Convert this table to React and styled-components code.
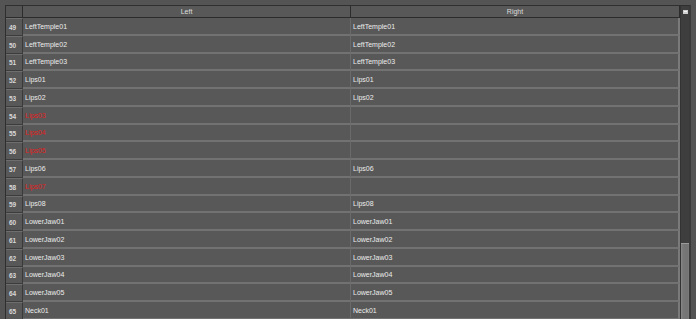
import styled, { createGlobalStyle } from 'styled-components';

const GlobalStyle = createGlobalStyle`
  html, body {
    margin: 0;
    padding: 0;
    background: #545454;
    overflow: hidden;
  }
  body {
    font-family: 'Liberation Sans', Arial, sans-serif;
  }
`;

const rows = [
  [49, 'LeftTemple01', 'LeftTemple01'],
  [50, 'LeftTemple02', 'LeftTemple02'],
  [51, 'LeftTemple03', 'LeftTemple03'],
  [52, 'Lips01', 'Lips01'],
  [53, 'Lips02', 'Lips02'],
  [54, 'Lips03', '', true],
  [55, 'Lips04', '', true],
  [56, 'Lips05', '', true],
  [57, 'Lips06', 'Lips06'],
  [58, 'Lips07', '', true],
  [59, 'Lips08', 'Lips08'],
  [60, 'LowerJaw01', 'LowerJaw01'],
  [61, 'LowerJaw02', 'LowerJaw02'],
  [62, 'LowerJaw03', 'LowerJaw03'],
  [63, 'LowerJaw04', 'LowerJaw04'],
  [64, 'LowerJaw05', 'LowerJaw05'],
  [65, 'Neck01', 'Neck01'],
];

const Frame = styled.div`
  width: 696px;
  height: 319px;
  padding: 5px 0 0 5px;
  box-sizing: border-box;
  overflow: hidden;
`;

const Table = styled.div`
  display: flex;
  width: 686px;
  height: 320px;
  border-top: 1px solid #2f2f2f;
  border-left: 1px solid #2f2f2f;
  border-right: 2px solid #3a3a3a;
  box-sizing: border-box;
`;

const Grid = styled.div`
  flex: 1;
  display: grid;
  grid-template-columns: 17px 328px 329px;
  grid-auto-rows: 17.75px;
  grid-template-rows: 12px;
  align-content: start;
`;

const Corner = styled.div`
  background: #555555;
  border-bottom: 1px solid #2c2c2c;
  border-right: 1px solid #2c2c2c;
`;

const HeadCell = styled.div`
  display: flex;
  align-items: center;
  justify-content: center;
  background: #585858;
  color: #dcdcdc;
  font-size: 7px;
  border-bottom: 1px solid #2c2c2c;
  border-right: 1px solid #2c2c2c;
  box-sizing: border-box;
`;

const RowNum = styled.div`
  display: flex;
  align-items: center;
  padding: 1px 0 0 3px;
  background: #585858;
  color: #d8d8d8;
  font-size: 6.5px;
  font-weight: 700;
  border-top: 1px solid #6e6e6e;
  border-right: 1px solid #3a3a3a;
  border-bottom: 1px solid #3c3c3c;
  box-sizing: border-box;
`;

const Cell = styled.div`
  display: flex;
  align-items: center;
  padding: 1px 0 0 2px;
  background: #585858;
  color: ${({ $missing }) => ($missing ? '#e02020' : '#ececec')};
  font-size: 7px;
  border-bottom: 2px solid #727272;
  border-right: ${({ $last }) => ($last ? '2px solid #7a7a7a' : '1px solid #6a6a6a')};
  box-sizing: border-box;
  white-space: nowrap;
`;

const ScrollBar = styled.div`
  width: 10px;
  display: flex;
  flex-direction: column;
  background: #3e3e3e;
  border-left: 1px solid #333;
  box-sizing: border-box;
`;

const ScrollTop = styled.div`
  height: 12px;
  display: flex;
  align-items: center;
  justify-content: center;
`;

const Track = styled.div`
  flex: 1;
  display: flex;
  flex-direction: column;
  padding-top: 225px;
`;

const Thumb = styled.div`
  flex: 1;
  background: linear-gradient(90deg, #8a8a8a 0px, #777 2px, #747474 7px, #8c8c8c 9px);
  border-top: 1px solid #9a9a9a;
`;

export default function App() {
  return (
    <>
      <GlobalStyle />
      <Frame>
        <Table>
          <Grid>
            <Corner />
            <HeadCell>Left</HeadCell>
            <HeadCell>Right</HeadCell>
            {rows.map(([n, l, r, missing]) => (
              <Row key={n} n={n} l={l} r={r} missing={missing} />
            ))}
          </Grid>
          <ScrollBar>
            <ScrollTop>
              <svg width="5" height="4" viewBox="0 0 5 4">
                <rect x="0" y="0" width="5" height="4" fill="#cfcfcf" />
                <rect x="1" y="1" width="3" height="1" fill="#f4f4f4" />
              </svg>
            </ScrollTop>
            <Track>
              <Thumb />
            </Track>
          </ScrollBar>
        </Table>
      </Frame>
    </>
  );
}

const Row = ({ n, l, r, missing }) => (
  <>
    <RowNum>{n}</RowNum>
    <Cell $missing={missing}>{l}</Cell>
    <Cell $last>{r}</Cell>
  </>
);
